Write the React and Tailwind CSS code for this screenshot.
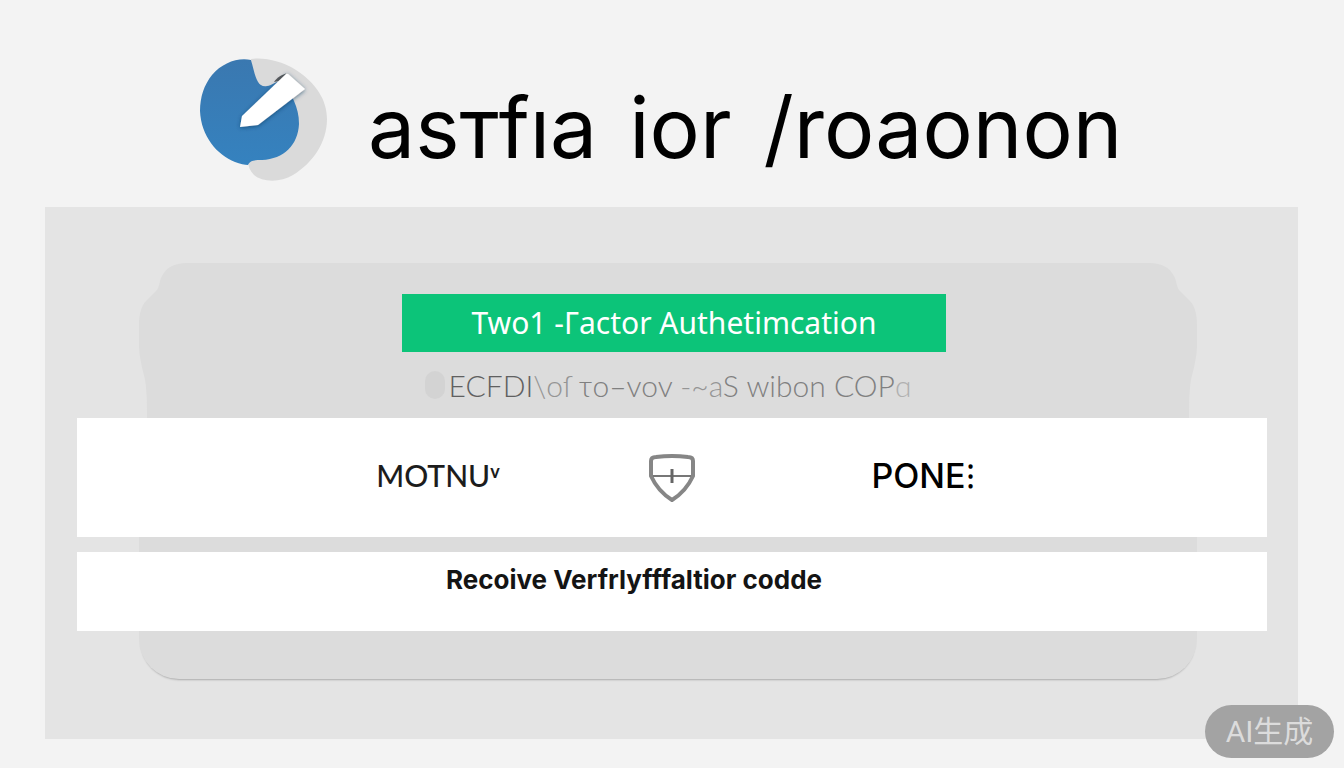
function Logo() {
  return (
    <svg viewBox="0 0 128 124" className="h-[124px] w-32 shrink-0" aria-hidden="true">
      <defs>
        <linearGradient id="disc" x1="0" y1="0" x2="0" y2="1">
          <stop offset="0" stopColor="#3a78b0" />
          <stop offset="1" stopColor="#3582bf" />
        </linearGradient>
        <filter id="penShadow" x="-30%" y="-30%" width="160%" height="160%">
          <feDropShadow dx="0" dy="1" stdDeviation="2" floodColor="#123a5e" floodOpacity="0.65" />
        </filter>
      </defs>
      <path
        d="M51 1C64-1 82 3 96 12C116 25 127 42 127 61C127 84 113 105 93 117C80 125 62 124 54 117C50 113 48 108 48 103L60 60Z"
        fill="#dadada"
      />
      <path
        d="M51 2C38-1 22 5 12 17C4 27 0 39 0 53C1 78 17 97 35 104C40 106 45 107 48 107C50 102 55 102 62 102C84 101 98 87 99 66C99 57 97 50 94 43L84 22C77 22 72 28 67 28C56 30 55 15 51 2Z"
        fill="url(#disc)"
      />
      <path d="M74 24C77 19 83 16 88 15L84 22Z" fill="#5a5a5a" />
      <path d="M40 69L42 58L87 15L105 31L58 67Z" fill="#fff" filter="url(#penShadow)" />
    </svg>
  )
}

function Shield() {
  return (
    <svg viewBox="0 0 46 48" className="h-12 w-[46px]" fill="none" aria-hidden="true">
      <path
        d="M2 22V7C2 4 4 3 7 3Q23 1 39 3C42 3 44 4 44 7V22C39 33 31 41 23 46C15 41 7 33 2 22Z"
        stroke="#868686"
        strokeWidth="4"
        strokeLinejoin="round"
      />
      <path d="M4 22H42" stroke="#777" strokeWidth="2" />
      <path d="M23 15V29" stroke="#666" strokeWidth="3" />
    </svg>
  )
}

// Fills the outside of a card corner with the panel colour
function CornerNotch({ className }) {
  return (
    <svg viewBox="0 0 48 155" className={`absolute top-0 h-[155px] w-12 ${className}`} aria-hidden="true">
      <path
        d="M-1-1H48V0C35 0 27 5 23 13C20 18 21 24 17 28L7 38C2 43 0 52 0 62V84C1 102 6 112 7 124C8 135 8 145 8 155H-1Z"
        fill="#e4e4e4"
      />
    </svg>
  )
}

export default function App() {
  return (
    <div className="relative flex min-h-screen flex-col bg-[#f3f3f3] pb-[29px] font-['Lato','Noto_Sans_CJK_SC',sans-serif] text-black">
      {/* ── Header ── */}
      <header className="flex h-[207px] items-start pl-[200px] pt-[58px]">
        <Logo />
        <h1 className="ml-10 flex gap-8 whitespace-nowrap font-['Inter',sans-serif] text-[84px] leading-[140px]">
          <span>asтfıa</span>
          <span>ior</span>
          <span>/roaonon</span>
        </h1>
      </header>

      {/* ── Panel ── */}
      <main className="mr-[46px] ml-[45px] flex flex-1 flex-col bg-[#e4e4e4] pt-14 pb-[60px]">
        <section className="relative mr-[101px] ml-[94px] flex flex-1 flex-col rounded-[40px] bg-[#dcdcdc] pt-[31px] pb-12 shadow-[0_3px_2px_-2px_rgba(0,0,0,0.25)]">
          <CornerNotch className="left-0" />
          <CornerNotch className="right-0 -scale-x-100" />

          <button className="ml-3 h-[58px] w-[544px] self-center bg-[#0cc479] font-['Noto_Sans',sans-serif] text-[30px] leading-8 text-white">
            Two1 -Γactor Authetimcation
          </button>

          <div className="flex h-[66px] items-center justify-center gap-1 whitespace-nowrap text-[30px] font-light">
            <span className="h-7 w-5 rounded-full bg-[#d3d3d3]" />
            <p className="text-[#808080]">
              <span className="text-[#606060]">ECFDI</span>
              <span className="text-[#959595]">\oſ</span> τo–vov <span className="text-[#959595]">-~a</span>S wibon COP
              <span className="text-[#b0b0b0]">ɑ</span>
            </p>
          </div>

          <div className="relative -mr-[70px] -ml-[62px] flex flex-col gap-[15px]">
            <div className="grid h-[119px] grid-cols-[1fr_46px_1fr] items-center bg-white text-[30px] text-[#1c1c1c]">
              <button className="h-full pb-1 pl-[150px] font-medium">MOTNU<sup className="text-lg font-bold">v</sup></button>
              <Shield />
              <button className="h-full pr-[116px] pb-1 font-['Inter',sans-serif] text-[34px] font-medium text-black">PONE⁝</button>
            </div>
            <button className="flex h-[79px] items-start justify-center bg-white pt-2 pr-[76px] font-['Inter',sans-serif] text-[26px] font-bold text-[#141414]">
              Recoive Verfrlyfffaltior codde
            </button>
          </div>
        </section>
      </main>

      <div className="absolute right-[10px] bottom-[10px] flex h-[53px] w-[129px] items-center justify-center rounded-full bg-[#a3a3a3] font-['Roboto','Noto_Sans_CJK_SC',sans-serif] text-[30px] text-[#dcdcdc]">
        AI生成
      </div>
    </div>
  )
}
